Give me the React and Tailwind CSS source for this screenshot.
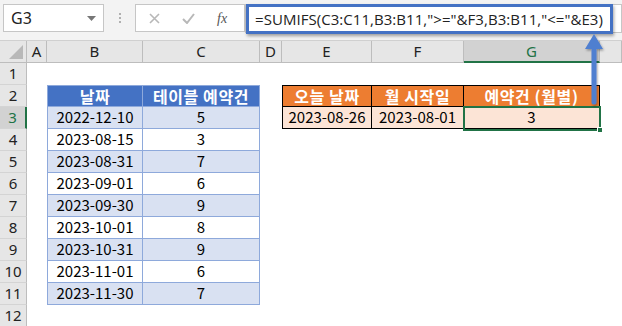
import React from "react";

const COLS = [
  { k: "A", w: "w-[20px]" },
  { k: "B", w: "w-[96px]" },
  { k: "C", w: "w-[117px]" },
  { k: "D", w: "w-[22px]" },
  { k: "E", w: "w-[90px]" },
  { k: "F", w: "w-[92px]" },
  { k: "G", w: "w-[136px]" },
  { k: "H", w: "w-[22px]" },
];

const data = [
  ["2022-12-10", "5"],
  ["2023-08-15", "3"],
  ["2023-08-31", "7"],
  ["2023-09-01", "6"],
  ["2023-09-30", "9"],
  ["2023-10-01", "8"],
  ["2023-10-31", "9"],
  ["2023-11-01", "6"],
  ["2023-11-30", "7"],
];

const kr = { fontFamily: '"Noto Sans CJK KR", "Noto Sans", sans-serif' };
const ui = { fontFamily: '"Noto Sans", "Liberation Sans", sans-serif' };

function RowHead({ n, active }) {
  return (
    <div
      className={`w-[27px] h-[22px] shrink-0 flex items-center justify-center text-[15px] border-b border-[#d4d4d4] ${
        active
          ? "bg-[#d2d2d2] text-[#217346] border-r-2 border-r-[#217346]"
          : "bg-[#e6e6e6] text-[#222] border-r border-r-[#bdbdbd]"
      }`}
      style={ui}
    >
      {n}
    </div>
  );
}

function Empty({ w }) {
  return <div className={`${w} h-[22px] shrink-0`} />;
}

const hdr = "h-[22px] shrink-0 flex items-center justify-center text-white font-bold text-[16px] tracking-[0.6px]";

export default function App() {
  return (
    <div className="relative w-[622px] h-[326px] overflow-hidden bg-white" style={kr}>
      {/* Formula bar area */}
      <div className="h-[41px] bg-[#f3f3f3] flex items-start pt-[4px] pl-[3px] border-b border-[#d0d0d0]">
        <div className="w-[101px] h-[28px] bg-white border border-[#c6c6c6] flex items-center justify-between pl-[7px] pr-[7px]">
          <span className="text-[16px] text-[#222] leading-none" style={ui}>G3</span>
          <svg width="9" height="5" viewBox="0 0 9 5"><path d="M0 0h9L4.5 5z" fill="#777" /></svg>
        </div>
        <div className="w-[31px] h-[28px] flex flex-col items-center justify-center gap-[2px]">
          <div className="w-[2px] h-[2px] bg-[#b0b0b0]" />
          <div className="w-[2px] h-[2px] bg-[#b0b0b0]" />
          <div className="w-[2px] h-[2px] bg-[#b0b0b0]" />
        </div>
        <div className="w-[110px] h-[28px] bg-white border border-[#c6c6c6] flex items-center">
          <svg className="ml-[13px]" width="11" height="11" viewBox="0 0 11 11">
            <path d="M1 1L10 10M10 1L1 10" stroke="#b8b8b8" strokeWidth="1.6" />
          </svg>
          <svg className="ml-[22px]" width="13" height="11" viewBox="0 0 13 11">
            <path d="M1 6L5 10L12 1" stroke="#b8b8b8" strokeWidth="2" fill="none" />
          </svg>
          <span
            className="ml-[22px] text-[14px] italic text-[#555]"
            style={{ fontFamily: '"Liberation Serif", serif' }}
          >
            fx
          </span>
        </div>
        <div className="flex-1 h-[29px] bg-white border border-[#c6c6c6] relative">
          <div className="absolute left-[0px] top-[-1px] w-[367px] h-[30px] border-[3px] border-[#4472c4] bg-white flex items-center pl-[6px] shadow-[1px_2px_3px_rgba(0,0,0,0.35)]">
            <span className="text-[15px] tracking-[0.05px] text-[#222] whitespace-nowrap" style={{ fontFamily: '"Open Sans", "Noto Sans", sans-serif' }}>
              =SUMIFS(C3:C11,B3:B11,"&gt;="&amp;F3,B3:B11,"&lt;="&amp;E3)
            </span>
          </div>
        </div>
      </div>

      {/* Column headers */}
      <div className="flex h-[22px]">
        <div className="w-[27px] h-[22px] shrink-0 bg-[#e6e6e6] border-r border-b border-[#bdbdbd] relative">
          <svg className="absolute right-[3px] bottom-[3px]" width="14" height="14" viewBox="0 0 14 14">
            <path d="M14 0V14H0z" fill="#b8b8b8" />
          </svg>
        </div>
        {COLS.map((c) =>
          c.k === "G" ? (
            <div
              key={c.k}
              className={`${c.w} shrink-0 h-[22px] bg-[#d2d2d2] border-r border-r-[#bdbdbd] border-b-2 border-b-[#217346] flex items-center justify-center text-[15px] text-[#217346]`}
              style={ui}
            >
              {c.k}
            </div>
          ) : (
            <div
              key={c.k}
              className={`${c.w} shrink-0 h-[22px] bg-[#e6e6e6] border-r border-b border-[#bdbdbd] flex items-center justify-center text-[15px] text-[#222]`}
              style={ui}
            >
              {c.k === "H" ? "" : c.k}
            </div>
          )
        )}
      </div>

      {/* Row 1 */}
      <div className="flex">
        <RowHead n={1} />
      </div>

      {/* Row 2 */}
      <div className="flex">
        <RowHead n={2} />
        <Empty w="w-[20px]" />
        <div className={`w-[96px] bg-[#4472c4] border border-[#8ea9db] ${hdr}`}>날짜</div>
        <div className={`w-[117px] bg-[#4472c4] border-y border-r border-[#8ea9db] ${hdr}`}>테이블 예약건</div>
        <Empty w="w-[22px]" />
        <div className={`w-[90px] bg-[#ed7d31] border border-black ${hdr}`}>오늘 날짜</div>
        <div className={`w-[92px] bg-[#ed7d31] border-y border-r border-black ${hdr}`}>월 시작일</div>
        <div className={`w-[136px] bg-[#ed7d31] border-y border-r border-black ${hdr}`}>예약건 (월별)</div>
      </div>

      {/* Rows 3-11 */}
      {data.map(([d, v], i) => {
        const n = i + 3;
        const band = i % 2 === 0 ? "bg-[#d9e1f2]" : "bg-white";
        return (
          <div className="flex" key={n}>
            <RowHead n={n} active={n === 3} />
            <Empty w="w-[20px]" />
            <div className={`w-[96px] h-[22px] shrink-0 ${band} border-x border-b border-[#8ea9db] flex items-center justify-center text-[15px] text-black`}>
              {d}
            </div>
            <div className={`w-[117px] h-[22px] shrink-0 ${band} border-r border-b border-[#8ea9db] flex items-center justify-center text-[15px] text-black`}>
              {v}
            </div>
            {n === 3 && (
              <>
                <Empty w="w-[22px]" />
                <div className="w-[90px] h-[22px] shrink-0 bg-[#fce4d6] border-x border-b border-black flex items-center justify-center text-[15px] text-black">
                  2023-08-26
                </div>
                <div className="w-[92px] h-[22px] shrink-0 bg-[#fce4d6] border-r border-b border-black flex items-center justify-center text-[15px] text-black">
                  2023-08-01
                </div>
                <div className="w-[136px] h-[22px] shrink-0 bg-[#fce4d6] border-r border-b border-black flex items-center justify-center text-[15px] text-black">
                  3
                </div>
              </>
            )}
          </div>
        );
      })}

      {/* Row 12 */}
      <div className="flex">
        <RowHead n={12} />
      </div>

      {/* Selection on G3 */}
      <div className="absolute left-[463px] top-[106px] w-[138px] h-[25px] border-2 border-[#217346]" />
      <div className="absolute left-[597px] top-[127px] w-[6px] h-[6px] bg-[#217346] border border-white" />

      {/* Annotation arrow */}
      <svg className="absolute left-[580px] top-[31px]" width="30" height="80" viewBox="0 0 30 80">
        <defs>
          <filter id="sh" x="-50%" y="-50%" width="200%" height="200%">
            <feDropShadow dx="1" dy="1.5" stdDeviation="1" floodColor="#000" floodOpacity="0.35" />
          </filter>
        </defs>
        <g filter="url(#sh)">
          <path d="M14 3L23 18H16.5V71a2.5 2.5 0 0 1-5 0V18H5z" fill="#4f7fd0" />
        </g>
      </svg>
    </div>
  );
}
